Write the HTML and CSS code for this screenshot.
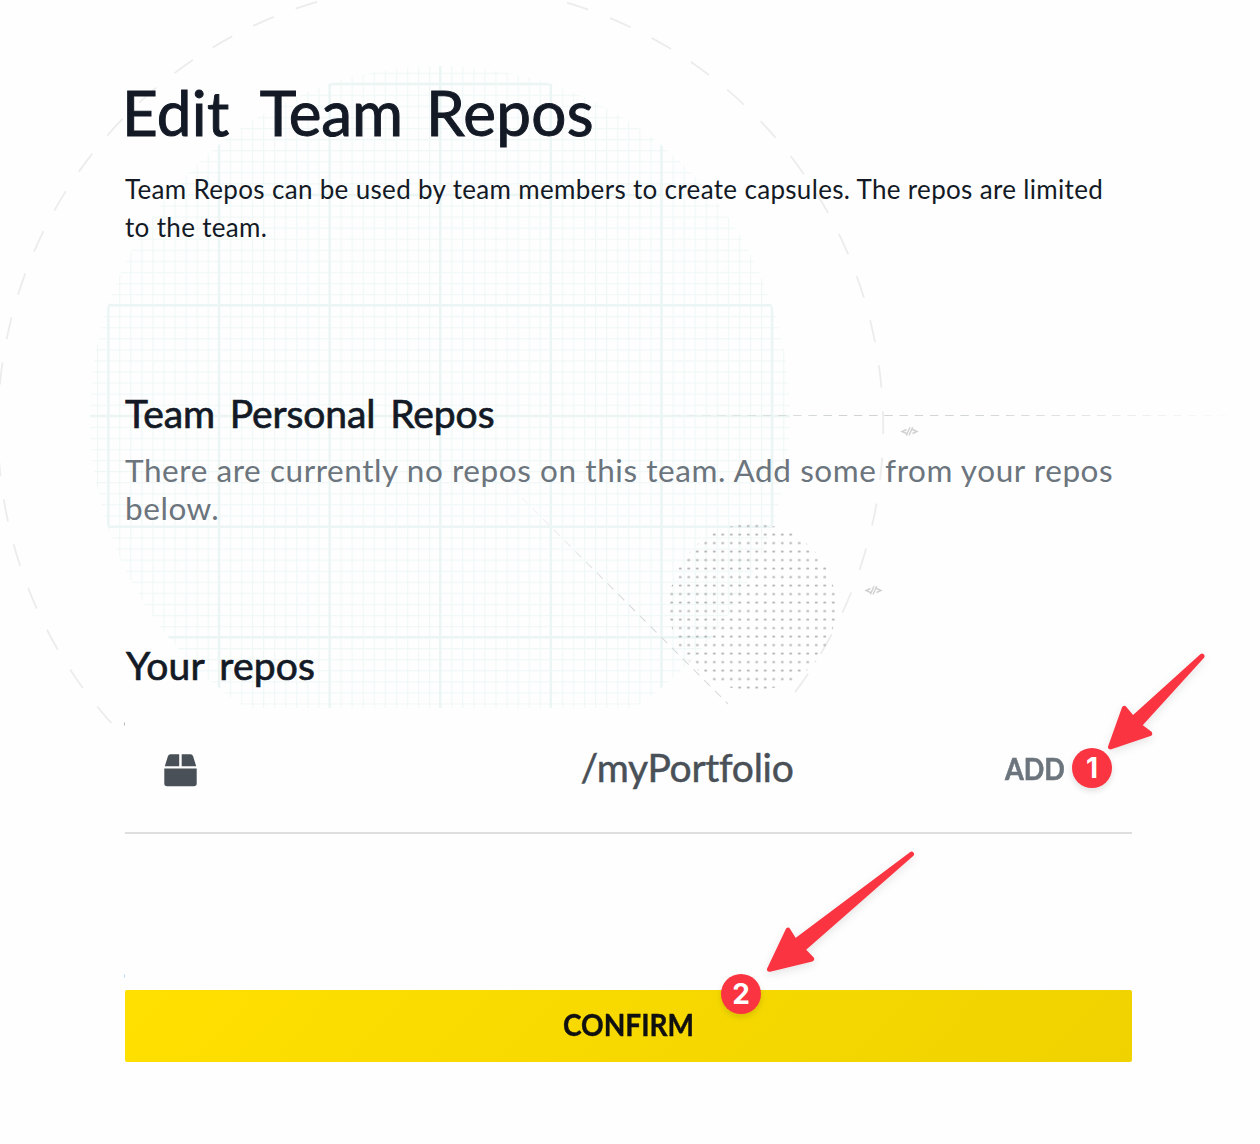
FILE: index.html
```html
<!DOCTYPE html>
<html lang="en">
<head>
<meta charset="utf-8">
<title>Edit Team Repos</title>
<link rel="stylesheet" href="styles.css">
</head>
<body>
<svg class="backdrop" width="1260" height="723" viewBox="0 0 1260 723" aria-hidden="true">
  <defs>
    <pattern id="fine" x="440.1" y="415.7" width="11.067" height="11.067" patternUnits="userSpaceOnUse">
      <path d="M0 .6H11.067M.6 0V11.067" stroke="#f0f8f7" stroke-width="1.2"/>
    </pattern>
    <pattern id="dots" x="667.5" y="521.8" width="8.5" height="8.5" patternUnits="userSpaceOnUse">
      <rect x="2.9" y="3.3" width="2.7" height="1.9" rx=".8" fill="#b3b3b3"/>
    </pattern>
    <clipPath id="disc"><path d="M90 416a350 350 0 0 1 700 0 350 350 0 0 1-156 292H246A350 350 0 0 1 90 416Z"/></clipPath>
    <linearGradient id="fadeRight" gradientUnits="userSpaceOnUse" x1="660" y1="0" x2="1245" y2="0">
      <stop offset="0" stop-color="#cfd3d3" stop-opacity="0"/>
      <stop offset=".3" stop-color="#cfd3d3"/>
      <stop offset=".55" stop-color="#d4d7d7"/>
      <stop offset="1" stop-color="#d4d7d7" stop-opacity="0"/>
    </linearGradient>
    <linearGradient id="fadeDown" gradientUnits="userSpaceOnUse" x1="500" y1="476" x2="728" y2="704">
      <stop offset="0" stop-color="#d6d8d8" stop-opacity="0"/>
      <stop offset=".6" stop-color="#d6d8d8"/>
      <stop offset="1" stop-color="#dadada"/>
    </linearGradient>
  </defs>
  <g clip-path="url(#disc)">
    <rect x="90" y="66" width="700" height="642" fill="url(#fine)"/>
    <path d="M329 84H552M219 195H661M108 305.3H772M90 416H790M108 526.6H772M168 637.2H712M108.3 305V527M219 144V688M329.6 84V708M440.2 66V708M550.8 84V708M661.4 144V688M772 305V527" fill="none" stroke="#eaf5f4" stroke-width="2.4"/>
  </g>
  <g fill="none" stroke="#ececec" stroke-width="1.8">
    <path d="M883.2 427A442.7 442.7 0 1 0 440.5 869.7" stroke-dasharray="22.5 23.43" stroke-dashoffset="6.5"/>
    <path d="M883.2 427A442.7 442.7 0 0 1 440.5 869.7" stroke-dasharray="22.5 23.7" stroke-dashoffset="15.5"/>
  </g>
  <rect x="730" y="703" width="130" height="21" fill="#fefefe"/>
  <path d="M671.5 415.5H1245" stroke="url(#fadeRight)" stroke-width="1.1" stroke-dasharray="8.5 6.7"/>
  <path d="M500 476L728 704" stroke="url(#fadeDown)" stroke-width="1.1" stroke-dasharray="8.5 6.7"/>
  <circle cx="752.5" cy="607" r="83.5" fill="url(#dots)"/>
  <g fill="none" stroke="#d0d0d0" stroke-width="1.4">
    <path id="tag" d="M906.5 429.500L902 431.500L906.500 433.500M912.500 429.500L917 431.500L912.500 433.500M906.300 435.500L910 427.200M909 435.500L912.700 427.200"/>
    <use href="#tag" x="-36" y="159"/>
  </g>
</svg>
<main class="page">
  <h1 class="title">Edit <span class="title-mid">Team</span> Repos</h1>
  <p class="intro">Team Repos can be used by team members to create capsules. The repos are limited<br>to the team.</p>
  <section class="team">
    <h2 class="heading">Team Personal Repos</h2>
    <p class="empty">There are currently no repos on this team. Add some from your repos<br>below.</p>
  </section>
  <section class="own">
    <h2 class="heading heading-own">Your repos</h2>
    <div class="repo">
      <svg class="box" width="33" height="33" viewBox="0 0 33 33" aria-hidden="true">
        <path d="M6.500 .3H15.200V12.200H.8L3.900 2.300Q4.600 .3 6.500 .3ZM17.700 .3H26.500Q28.400 .3 29.100 2.300L32.200 12.200H17.700ZM.3 14.500H32.700V29.500Q32.700 32.300 29.900 32.300H3.100Q.3 32.300 .3 29.500Z" fill="#495057"/>
      </svg>
      <span class="name">/myPortfolio</span>
      <span class="action"><span class="add">ADD</span><span class="badge">1</span></span>
    </div>
  </section>
  <button class="confirm" type="button"><span class="confirm-label">CONFIRM</span><span class="badge badge-confirm">2</span></button>
</main>
<svg class="arrows" width="1260" height="1144" viewBox="0 0 1260 1144" aria-hidden="true">
  <path d="M124.500 722.500V725.500" stroke="#b5b9bc"/>
  <path d="M124.500 974.500V977.500" stroke="#b9dcf5"/>
  <g class="pointers" fill="#fb3441" stroke="#fb3441" stroke-width="5" stroke-linejoin="round">
    <path d="M1202 656.200L1132.800 718.500L1124.300 708.300L1110.500 747L1149.700 733.600L1139 725.500Z"/>
    <path d="M911.500 854.200L795 941.500L788 930.200L769.500 969.300L811.700 959L802.500 949.600Z"/>
  </g>
</svg>
</body>
</html>
```
FILE: styles.css
```css
* { box-sizing: border-box; }
body {
  margin: 0;
  height: 1144px;
  position: relative;
  overflow: hidden;
  background: #fefefe;
  color: #131a26;
  font-family: Lato, "Liberation Sans", sans-serif;
}
h1, h2, p { margin: 0; font-weight: 400; white-space: nowrap; }
.backdrop, .arrows { position: absolute; top: 0; left: 0; }
.arrows { pointer-events: none; }
.pointers { filter: drop-shadow(0 3px 4px rgba(0, 0, 0, .1)); }
.page {
  position: relative;
  width: 1007px;
  margin-left: 125px;
  padding-top: 72px;
}
.title {
  height: 98px;
  margin-left: -3px;
  font-size: 62px;
  line-height: 80px;
  letter-spacing: .3px;
  word-spacing: 10px;
  -webkit-text-stroke: 1px;
}
.title-mid { margin: 0 -3px 0 4px; letter-spacing: -.1px; }
.intro {
  height: 76px;
  font-size: 26px;
  line-height: 38px;
  letter-spacing: .33px;
}
.team { padding-top: 142px; }
.heading {
  font-size: 39px;
  line-height: 50px;
  letter-spacing: -.1px;
  word-spacing: 5px;
  -webkit-text-stroke: .7px;
}
.heading-own { margin-left: 1px; letter-spacing: .2px; }
.empty {
  margin-top: 13px;
  height: 76px;
  font-size: 31.5px;
  line-height: 38px;
  letter-spacing: .57px;
  color: #6c757d;
}
.own { padding-top: 113px; }
.repo {
  margin-top: 16px;
  height: 128px;
  display: grid;
  grid-template-columns: 340px 444px 1fr;
  align-items: center;
  padding-bottom: 2px;
  border-bottom: 2px solid #dedede;
}
.box { margin: 5px 0 0 39px; }
.name {
  justify-self: center;
  font-size: 39px;
  line-height: 46px;
  margin-bottom: 2px;
  letter-spacing: -.27px;
  color: #495057;
  -webkit-text-stroke: .5px;
}
.action { display: flex; align-items: center; justify-content: flex-end; gap: 7px; padding-right: 20px; }
.add {
  font-size: 31px;
  font-weight: 700;
  color: #6c757d;
  transform: scaleX(.87);
  transform-origin: right;
  -webkit-text-stroke: .6px;
}
.badge {
  width: 40px;
  height: 40px;
  border-radius: 50%;
  background: #fb3441;
  color: #fff;
  font: 700 28px/40px Inter, sans-serif;
  text-align: center;
  box-shadow: 0 3px 6px rgba(0, 0, 0, .12);
}
.confirm {
  position: relative;
  display: block;
  width: 100%;
  height: 72px;
  margin-top: 156px;
  border: 0;
  border-radius: 2px;
  padding: 0;
  background: linear-gradient(135deg, #ffe000, #efd200);
  color: #101010;
  font: 700 31px/68px Lato, sans-serif;
}
.confirm-label { display: block; height: 72px; transform: scaleX(.905); -webkit-text-stroke: .4px; }
.badge-confirm { position: absolute; left: 596px; top: -16px; }
```
